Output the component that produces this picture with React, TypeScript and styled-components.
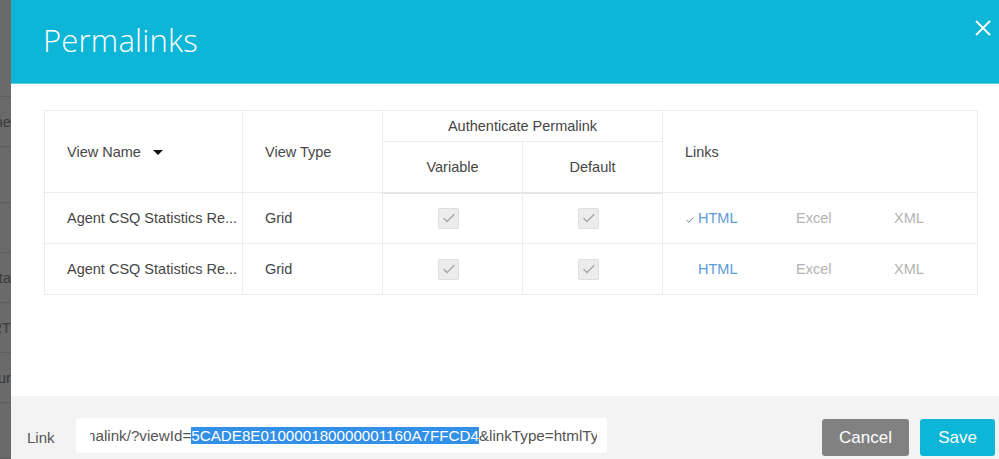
import React from "react";
import styled, { createGlobalStyle } from "styled-components";

const Global = createGlobalStyle`
  *, *::before, *::after { box-sizing: border-box; }
  html, body { margin: 0; padding: 0; }
  body { font-family: "Liberation Sans", Arial, sans-serif; background: #6b6b6b; }
  #root { width: 999px; height: 459px; overflow: hidden; }
`;

const Page = styled.div`
  display: flex;
  width: 999px;
  height: 459px;
  overflow: hidden;
`;

const Backdrop = styled.div`
  width: 11px;
  flex: none;
  display: flex;
  flex-direction: column;
  background: #6a6a6a;
  overflow: hidden;
`;

const BackdropRow = styled.div<{ $h: number }>`
  height: ${(p) => p.$h}px;
  flex: none;
  display: flex;
  align-items: center;
  justify-content: flex-end;
  border-bottom: 1px solid #5e5e5e;
  white-space: nowrap;
  font-size: 15px;
  color: #3a3a3a;
  overflow: hidden;
`;

const Modal = styled.div`
  flex: 1;
  display: flex;
  flex-direction: column;
  background: #fff;
  min-width: 0;
`;

const Header = styled.div`
  height: 84px;
  flex: none;
  display: flex;
  align-items: center;
  justify-content: space-between;
  background: #0db5d6;
  border-bottom: 1px solid #56cde4;
  padding: 0 7px 0 32px;
`;

const Title = styled.h1`
  margin: 0 0 4px 0;
  font-family: "Open Sans", "Liberation Sans", sans-serif;
  font-weight: 300;
  font-size: 31px;
  color: #fff;
  letter-spacing: 0.2px;
`;

const CloseButton = styled.button`
  border: 0;
  background: transparent;
  padding: 0;
  width: 18px;
  height: 18px;
  margin-bottom: 28px;
  display: flex;
  align-items: center;
  justify-content: center;
  cursor: pointer;
`;

const Body = styled.div`
  flex: 1;
  padding: 26px 22px 0 33px;
`;

const Table = styled.table`
  border-collapse: collapse;
  width: 933px;
  table-layout: fixed;
  font-size: 14.5px;
  color: #464646;
  border: 1px solid #ececec;
`;

const Th = styled.th<{ $align?: string; $h: number }>`
  font-weight: 400;
  text-align: ${(p) => p.$align || "left"};
  padding: 0 0 0 ${(p) => (p.$align === "center" ? 0 : 22)}px;
  height: ${(p) => p.$h}px;
  border: 1px solid #ececec;
  vertical-align: middle;
`;

const HeadRow = styled.tr`
  & + & > th {
    border-bottom: 2px solid #e6e6e6;
  }
`;

const Td = styled.td<{ $center?: boolean }>`
  height: 51px;
  border: 1px solid #ececec;
  padding: 0 ${(p) => (p.$center ? "8px" : "0")} 0 ${(p) => (p.$center ? "0" : "22px")};
  text-align: ${(p) => (p.$center ? "center" : "left")};
  vertical-align: middle;
  white-space: nowrap;
  overflow: hidden;
`;

const SortLabel = styled.span`
  display: inline-flex;
  align-items: center;
  gap: 12px;
`;

const Caret = styled.span`
  width: 0;
  height: 0;
  border-left: 5px solid transparent;
  border-right: 5px solid transparent;
  border-top: 5px solid #111;
  margin-top: 2px;
`;

const CheckBox = styled.span`
  display: inline-flex;
  align-items: center;
  justify-content: center;
  width: 21px;
  height: 21px;
  background: #ececec;
  border: 1px solid #dedede;
  border-radius: 2px;
  vertical-align: middle;
`;

const LinkGroup = styled.div`
  display: grid;
  grid-template-columns: repeat(3, 98px);
`;

const LinkOption = styled.span<{ $active?: boolean }>`
  display: flex;
  align-items: center;
  color: ${(p) => (p.$active ? "#5b9bd8" : "#b3b3b3")};
`;

const CheckSlot = styled.span`
  width: 13px;
  flex: none;
  display: flex;
  align-items: flex-end;
  height: 16px;
  padding-bottom: 1px;
`;

const Footer = styled.div`
  height: 63px;
  flex: none;
  background: #f3f3f3;
  display: flex;
  align-items: center;
  padding: 2px 4px 0 16px;
`;

const FieldLabel = styled.label`
  width: 49px;
  font-size: 15px;
  color: #555;
  margin-top: 17px;
`;

const LinkField = styled.div`
  width: 531px;
  height: 35px;
  background: #fff;
  border-radius: 3px;
  display: flex;
  align-items: center;
  font-size: 15.2px;
  color: #555;
  margin-top: 14px;
  padding: 0 10px 0 14px;
`;

const Viewport = styled.div`
  flex: 1;
  overflow: hidden;
  white-space: nowrap;
`;

const Scrolled = styled.span`
  margin-left: -3px;
`;

const Selected = styled.span`
  background: #3390e8;
  color: #fff;
`;

const Actions = styled.div`
  margin-left: auto;
  display: flex;
  gap: 11px;
  margin-top: 18px;
`;

const Button = styled.button<{ $primary?: boolean }>`
  height: 37px;
  border: 0;
  border-radius: 3px;
  padding: 0 17px;
  font-family: "Liberation Sans", Arial, sans-serif;
  font-size: 17px;
  color: #fff;
  background: ${(p) => (p.$primary ? "#0db5d6" : "#818181")};
  min-width: ${(p) => (p.$primary ? 75 : 85)}px;
`;

const Check = ({ color, size }: { color: string; size: number }) => (
  <svg width={size} height={size} viewBox="0 0 16 16" fill="none">
    <path d="M3 8.5l3 3 7-7" stroke={color} strokeWidth="1.4" strokeLinecap="round" strokeLinejoin="round" />
  </svg>
);

const rows = [
  { name: "Agent CSQ Statistics Re...", active: true },
  { name: "Agent CSQ Statistics Re...", active: false },
];

export default function App() {
  return (
    <Page>
      <Global />
      <Backdrop>
        <BackdropRow $h={97} />
        <BackdropRow $h={50}>Name</BackdropRow>
        <BackdropRow $h={56} />
        <BackdropRow $h={50} />
        <BackdropRow $h={50}>Data</BackdropRow>
        <BackdropRow $h={50}>RT</BackdropRow>
        <BackdropRow $h={50}>Tour</BackdropRow>
        <BackdropRow $h={56} />
      </Backdrop>
      <Modal>
        <Header>
          <Title>Permalinks</Title>
          <CloseButton aria-label="Close">
            <svg width="16" height="16" viewBox="0 0 16 16">
              <path d="M1 1l14 14M15 1L1 15" stroke="#fff" strokeWidth="1.8" />
            </svg>
          </CloseButton>
        </Header>
        <Body>
          <Table>
            <colgroup>
              <col style={{ width: 198 }} />
              <col style={{ width: 140 }} />
              <col style={{ width: 140 }} />
              <col style={{ width: 140 }} />
              <col style={{ width: 315 }} />
            </colgroup>
            <thead>
              <HeadRow>
                <Th rowSpan={2} $h={31}>
                  <SortLabel>
                    View Name <Caret />
                  </SortLabel>
                </Th>
                <Th rowSpan={2} $h={31}>View Type</Th>
                <Th colSpan={2} $align="center" $h={31}>Authenticate Permalink</Th>
                <Th rowSpan={2} $h={31}>Links</Th>
              </HeadRow>
              <HeadRow>
                <Th $align="center" $h={51}>Variable</Th>
                <Th $align="center" $h={51}>Default</Th>
              </HeadRow>
            </thead>
            <tbody>
              {rows.map((r, i) => (
                <tr key={i}>
                  <Td>{r.name}</Td>
                  <Td>Grid</Td>
                  <Td $center>
                    <CheckBox>
                      <Check color="#a6a6a6" size={16} />
                    </CheckBox>
                  </Td>
                  <Td $center>
                    <CheckBox>
                      <Check color="#a6a6a6" size={16} />
                    </CheckBox>
                  </Td>
                  <Td>
                    <LinkGroup>
                      <LinkOption $active>
                        <CheckSlot>{r.active && <Check color="#3f7f5a" size={10} />}</CheckSlot>
                        HTML
                      </LinkOption>
                      <LinkOption>
                        <CheckSlot />
                        Excel
                      </LinkOption>
                      <LinkOption>
                        <CheckSlot />
                        XML
                      </LinkOption>
                    </LinkGroup>
                  </Td>
                </tr>
              ))}
            </tbody>
          </Table>
        </Body>
        <Footer>
          <FieldLabel>Link</FieldLabel>
          <LinkField>
            <Viewport>
              <Scrolled>
                nalink/?viewId=<Selected>5CADE8E010000180000001160A7FFCD4</Selected>&amp;linkType=htmlType
              </Scrolled>
            </Viewport>
          </LinkField>
          <Actions>
            <Button>Cancel</Button>
            <Button $primary>Save</Button>
          </Actions>
        </Footer>
      </Modal>
    </Page>
  );
}
